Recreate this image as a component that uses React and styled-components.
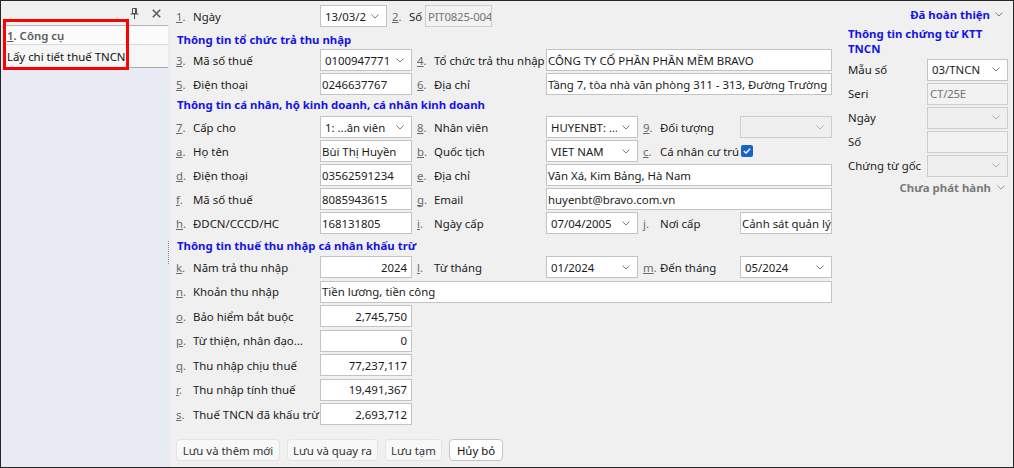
import React from "react";
import styled, { createGlobalStyle } from "styled-components";

const GlobalStyle = createGlobalStyle`
  html, body { margin: 0; padding: 0; }
  body {
    font-family: "Noto Sans", "Liberation Sans", sans-serif;
    font-size: 11.4px;
    color: #1b1b1b;
    background: #f0f0f0;
  }
  * { box-sizing: border-box; }
`;

const BLUE = "#1414e6";

const Frame = styled.div`
  width: 1014px;
  height: 468px;
  display: flex;
  border: 1px solid #262626;
  background: #f0f0f0;
  overflow: hidden;
`;

/* ---------- left tool panel ---------- */
const Side = styled.div`
  position: relative;
  width: 169px;
  flex: none;
  display: flex;
  flex-direction: column;
  background: #e8ebf4;
`;

const SideBar = styled.div`
  height: 24px;
  display: flex;
  align-items: center;
  justify-content: flex-end;
  gap: 13px;
  padding-right: 9px;
  background: #f0f0f0;
`;

const ToolList = styled.div`
  margin: 0 2px 0 4px;
  background: #fbfbfb;
  border-top: 1px solid #b4b4b4;
  border-bottom: 1px solid #a9a9a9;
`;

const ToolHead = styled.div`
  height: 19px;
  display: flex;
  align-items: center;
  padding-left: 2px;
  font-weight: 600;
  color: #5a5a5a;
  border-bottom: 1px solid #dadada;
`;

const ToolItem = styled.div`
  height: 22px;
  display: flex;
  align-items: center;
  padding-left: 2px;
  background: #f6f6f6;
  color: #111;
`;

const SideBody = styled.div`
  flex: 1;
  display: flex;
  justify-content: flex-end;
  align-items: center;
  padding-right: 1px;
  padding-bottom: 30px;
`;

const Grip = styled.div`
  height: 23px;
  border-left: 1px dotted #8d8d8d;
`;

const Highlight = styled.div`
  position: absolute;
  left: 2px;
  top: 18px;
  width: 126px;
  height: 51px;
  border: 3px solid #ff0000;
  pointer-events: none;
`;

/* ---------- main form ---------- */
const Form = styled.div`
  width: 670px;
  flex: none;
  padding: 4px 0 0 6px;
  display: flex;
  flex-direction: column;
`;

const Grid = styled.div`
  display: grid;
  grid-template-columns: 144px 92px 134px 92px 102px 92px;
  grid-auto-rows: 22px;
  row-gap: ${(p) => p.$gap || 0}px;
  align-items: center;
`;

const Title = styled.div`
  height: 16px;
  line-height: 16px;
  margin: ${(p) => p.$mt}px 0 ${(p) => p.$mb}px 1px;
  font-weight: 700;
  color: ${BLUE};
  white-space: nowrap;
`;

const Inline = styled.div`
  grid-column: span ${(p) => p.$span || 1};
  display: flex;
  align-items: center;
  height: 22px;
`;

const Caption = styled.div`
  display: flex;
  align-items: center;
  height: 22px;
  width: ${(p) => (p.$w ? `${p.$w}px` : "auto")};
  flex: none;
  padding-left: ${(p) => (p.$inset ? 5 : 0)}px;
  white-space: nowrap;
  overflow: hidden;
`;

const Key = styled.span`
  width: 17px;
  flex: none;
  color: #6a6a6a;
`;

const Box = styled.div`
  grid-column: span ${(p) => p.$span || 1};
  width: ${(p) => (p.$w ? `${p.$w}px` : "auto")};
  flex: none;
  height: 22px;
  display: flex;
  align-items: center;
  justify-content: ${(p) => (p.$right ? "flex-end" : "flex-start")};
  padding: 0 ${(p) => (p.$right ? 4 : 1)}px 0 ${(p) => (p.$off ? 2 : 1)}px;
  border: 1px solid ${(p) => (p.$off ? "#cdcdcd" : "#c3c3c3")};
  background: ${(p) => (p.$off ? "#f2f2f2" : "#ffffff")};
  color: ${(p) => (p.$off ? "#747474" : "#1b1b1b")};
  letter-spacing: ${(p) => (p.$off ? "-0.2px" : "normal")};
  white-space: nowrap;
  overflow: hidden;
`;

const DropBox = styled(Box)`
  justify-content: space-between;
  padding: 0 7px 0 4px;
  background: ${(p) => (p.$off ? "#efefef" : "#ffffff")};
  letter-spacing: normal;
`;

const DropText = styled.span`
  flex: 1;
  overflow: hidden;
  margin-right: 5px;
`;

const CheckMark = styled.span`
  width: 12px;
  height: 12px;
  margin-left: 1px;
  border-radius: 2px;
  background: #1763c6;
  display: flex;
  align-items: center;
  justify-content: center;
`;

const Buttons = styled.div`
  display: flex;
  gap: 7px;
  margin-top: 14px;
`;

const Btn = styled.button`
  height: 22px;
  width: ${(p) => p.$w}px;
  padding: 0;
  font: inherit;
  border-radius: 4px;
  border: 1px solid ${(p) => (p.$main ? "#c4c4c4" : "#e4e4e4")};
  background: ${(p) => (p.$main ? "#ffffff" : "#f8f8f8")};
  color: ${(p) => (p.$main ? "#111" : "#333")};
`;

/* ---------- right panel ---------- */
const Aside = styled.div`
  flex: 1;
  padding: 4px 5px 0 8px;
  display: flex;
  flex-direction: column;
`;

const Status = styled.div`
  height: 18px;
  display: flex;
  align-items: center;
  justify-content: flex-end;
  gap: ${(p) => p.$gap}px;
  padding-right: ${(p) => p.$pr}px;
  font-weight: 700;
  color: ${(p) => p.$color};
`;

const AsideTitle = styled.div`
  margin: 3px 0 3px;
  line-height: 15px;
  font-weight: 700;
  color: ${BLUE};
`;

const AsideRows = styled.div`
  display: grid;
  grid-template-columns: 79px 81px;
  grid-auto-rows: 21px;
  row-gap: 3px;
  align-items: center;
  margin-bottom: 2px;
`;

const AsideLabel = styled.span`
  white-space: nowrap;
`;

function Chevron({ color = "#7a7a7a" }) {
  return (
    <svg width="8" height="5" viewBox="0 0 8 5" style={{ flex: "none" }}>
      <path d="M0.5 0.6 L4 4 L7.5 0.6" fill="none" stroke={color} strokeWidth="1" />
    </svg>
  );
}

function Pin() {
  return (
    <svg width="9" height="11" viewBox="0 0 9 11">
      <path d="M2.5 0.5 H6.5 V5.5 H2.5 Z" fill="#f0f0f0" stroke="#4f4f4f" />
      <path d="M5.5 1 V5" stroke="#4f4f4f" />
      <path d="M0.5 6 H8.5 M4.5 6 V11" stroke="#4f4f4f" />
    </svg>
  );
}

function Close() {
  return (
    <svg width="9" height="9" viewBox="0 0 9 9">
      <path d="M0.8 0.8 L8.2 8.2 M8.2 0.8 L0.8 8.2" stroke="#5c5c5c" strokeWidth="1.6" />
    </svg>
  );
}

function Cap({ k, children, inset, w }) {
  return (
    <Caption $inset={inset} $w={w}>
      <Key>
        <u>{k}</u>.
      </Key>
      {children}
    </Caption>
  );
}

function Drop({ value, off, w, span }) {
  return (
    <DropBox $off={off} $w={w} $span={span}>
      <DropText>{value}</DropText>
      <Chevron color={off ? "#b0b0b0" : "#7a7a7a"} />
    </DropBox>
  );
}

function Check() {
  return (
    <CheckMark>
      <svg width="8" height="6" viewBox="0 0 8 6">
        <path d="M0.8 3 L3 5 L7.2 0.8" fill="none" stroke="#fff" strokeWidth="1.3" />
      </svg>
    </CheckMark>
  );
}

export default function App() {
  return (
    <>
      <GlobalStyle />
      <Frame>
        <Side>
          <SideBar>
            <Pin />
            <Close />
          </SideBar>
          <ToolList>
            <ToolHead>
              <u>1</u>. Công cụ
            </ToolHead>
            <ToolItem>Lấy chi tiết thuế TNCN</ToolItem>
          </ToolList>
          <SideBody>
            <Grip />
          </SideBody>
          <Highlight />
        </Side>

        <Form>
          <Grid>
            <Cap k="1">Ngày</Cap>
            <Inline $span={3}>
              <Drop w={67} value="13/03/2024" />
              <Cap k="2" inset w={38}>
                Số
              </Cap>
              <Box $off $w={67}>
                PIT0825-004
              </Box>
            </Inline>
          </Grid>

          <Title $mt={5} $mb={1}>Thông tin tổ chức trả thu nhập</Title>
          <Grid $gap={2}>
            <Cap k="3">Mã số thuế</Cap>
            <Drop value="0100947771" />
            <Cap k="4" inset>
              Tổ chức trả thu nhập
            </Cap>
            <Box $span={3}>CÔNG TY CỔ PHẦN PHẦN MỀM BRAVO</Box>

            <Cap k="5">Điện thoại</Cap>
            <Box>0246637767</Box>
            <Cap k="6" inset>
              Địa chỉ
            </Cap>
            <Box $span={3}>
              Tầng 7, tòa nhà văn phòng 311 - 313, Đường Trường Chinh, Thanh Xuân, Hà Nội
            </Box>
          </Grid>

          <Title $mt={2} $mb={3}>
            Thông tin cá nhân, hộ kinh doanh, cá nhân kinh doanh
          </Title>
          <Grid $gap={2}>
            <Cap k="7">Cấp cho</Cap>
            <Drop value="1: ...ân viên" />
            <Cap k="8" inset>
              Nhân viên
            </Cap>
            <Drop value="HUYENBT: ..." />
            <Cap k="9" inset>
              Đối tượng
            </Cap>
            <Drop off value="" />

            <Cap k="a">Họ tên</Cap>
            <Box>Bùi Thị Huyền</Box>
            <Cap k="b" inset>
              Quốc tịch
            </Cap>
            <Drop value="VIET NAM" />
            <Cap k="c" inset>
              Cá nhân cư trú
            </Cap>
            <Inline>
              <Check />
            </Inline>

            <Cap k="d">Điện thoại</Cap>
            <Box>03562591234</Box>
            <Cap k="e" inset>
              Địa chỉ
            </Cap>
            <Box $span={3}>Văn Xá, Kim Bảng, Hà Nam</Box>

            <Cap k="f">Mã số thuế</Cap>
            <Box>8085943615</Box>
            <Cap k="g" inset>
              Email
            </Cap>
            <Box $span={3}>huyenbt@bravo.com.vn</Box>

            <Cap k="h">ĐDCN/CCCD/HC</Cap>
            <Box>168131805</Box>
            <Cap k="i" inset>
              Ngày cấp
            </Cap>
            <Drop value="07/04/2005" />
            <Cap k="j" inset>
              Nơi cấp
            </Cap>
            <Box>Cảnh sát quản lý hành chính về trật tự xã hội</Box>
          </Grid>

          <Title $mt={4} $mb={2}>Thông tin thuế thu nhập cá nhân khấu trừ</Title>
          <Grid $gap={2.5}>
            <Cap k="k">Năm trả thu nhập</Cap>
            <Box $right>2024</Box>
            <Cap k="l" inset>
              Từ tháng
            </Cap>
            <Drop value="01/2024" />
            <Cap k="m" inset>
              Đến tháng
            </Cap>
            <Drop value="05/2024" />

            <Cap k="n">Khoản thu nhập</Cap>
            <Box $span={5}>Tiền lương, tiền công</Box>

            <Cap k="o">Bảo hiểm bắt buộc</Cap>
            <Box $right>2,745,750</Box>
            <Inline $span={4} />

            <Cap k="p">Từ thiện, nhân đạo...</Cap>
            <Box $right>0</Box>
            <Inline $span={4} />

            <Cap k="q">Thu nhập chịu thuế</Cap>
            <Box $right>77,237,117</Box>
            <Inline $span={4} />

            <Cap k="r">Thu nhập tính thuế</Cap>
            <Box $right>19,491,367</Box>
            <Inline $span={4} />

            <Cap k="s">Thuế TNCN đã khấu trừ</Cap>
            <Box $right>2,693,712</Box>
          </Grid>

          <Buttons>
            <Btn $w={104}>Lưu và thêm mới</Btn>
            <Btn $w={91}>Lưu và quay ra</Btn>
            <Btn $w={57}>Lưu tạm</Btn>
            <Btn $main $w={54}>
              Hủy bỏ
            </Btn>
          </Buttons>
        </Form>

        <Aside>
          <Status $color={BLUE} $pr={5} $gap={5}>
            Đã hoàn thiện
            <Chevron />
          </Status>
          <AsideTitle>
            Thông tin chứng từ KTT
            <br />
            TNCN
          </AsideTitle>
          <AsideRows>
            <AsideLabel>Mẫu số</AsideLabel>
            <Drop value="03/TNCN" />
            <AsideLabel>Seri</AsideLabel>
            <Box $off>CT/25E</Box>
            <AsideLabel>Ngày</AsideLabel>
            <Drop off value="" />
            <AsideLabel>Số</AsideLabel>
            <Box $off />
            <AsideLabel>Chứng từ gốc</AsideLabel>
            <Drop off value="" />
          </AsideRows>
          <Status $color="#7a7a7a" $pr={3} $gap={6}>
            Chưa phát hành
            <Chevron color="#9a9a9a" />
          </Status>
        </Aside>
      </Frame>
    </>
  );
}
